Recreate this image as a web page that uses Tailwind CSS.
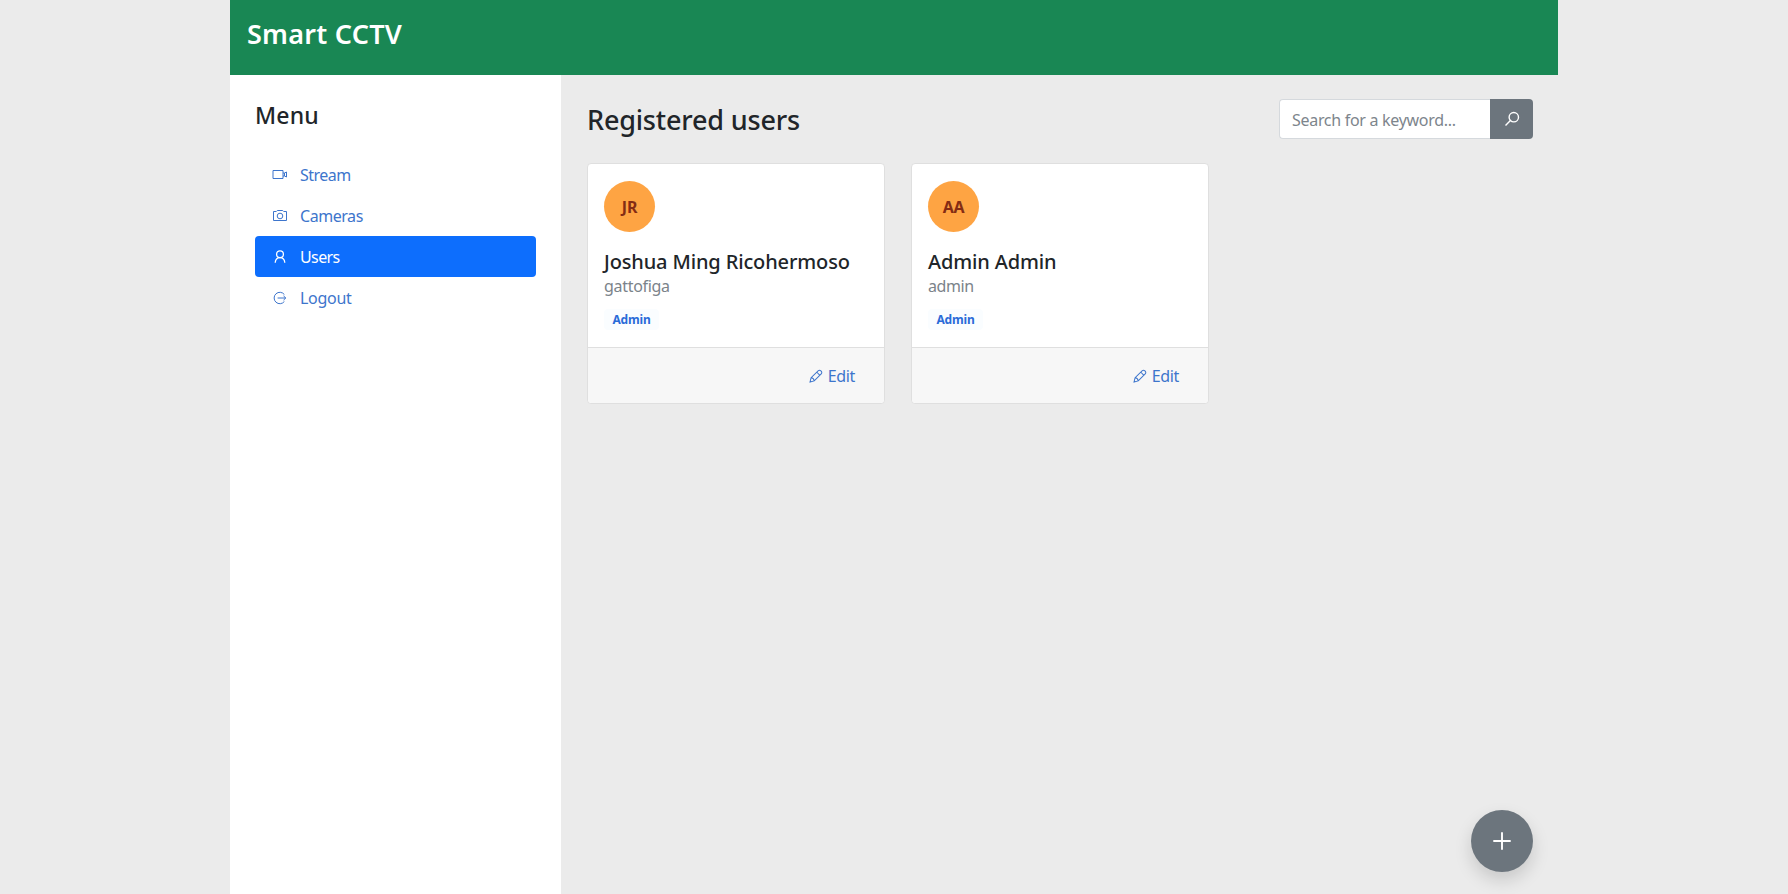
<!DOCTYPE html>
<html lang="en">
<head>
<meta charset="utf-8">
<title>Smart CCTV</title>
<script src="https://cdn.jsdelivr.net/npm/@tailwindcss/browser@4"></script>
</head>
<body class="h-screen overflow-hidden bg-[#ebebeb] font-['Noto_Sans','Open_Sans',sans-serif] text-base text-[#212529]">
<div class="mx-auto flex h-full w-[1328px] flex-col">
  <header class="flex h-[75px] shrink-0 items-start bg-[#198754] px-[17px] pt-[14px]">
    <h1 class="text-[27px] leading-[40px] font-semibold tracking-[0.25px] text-white">Smart CCTV</h1>
  </header>
  <div class="flex min-h-0 flex-1">
    <aside class="w-[331px] shrink-0 bg-white px-[25px] pt-[25px]">
      <h2 class="text-[23px] leading-[30px] font-medium tracking-[0.2px]">Menu</h2>
      <nav class="mt-[24px] flex flex-col text-[#3d75cc]">
        <a class="flex h-[41px] items-center gap-[12px] px-[17px]">
          <svg class="size-[16px]" viewBox="0 0 16 16" fill="none" stroke="currentColor"><path d="M1 3.500h10v8H1zM11 6h1.500v3H11M12.500 6l2-1v5l-2-1"/></svg>
          <span class="tracking-[-0.5px]">Stream</span></a>
        <a class="flex h-[41px] items-center gap-[12px] px-[17px]">
          <svg class="size-[16px]" viewBox="0 0 16 16" fill="none" stroke="currentColor"><path d="M1.500 3.500h2.800l1-1h5.400l1 1h2.800v9h-13z"/><circle cx="8" cy="8" r="2.800"/></svg>
          <span class="tracking-[-0.45px]">Cameras</span></a>
        <a class="flex h-[41px] items-center gap-[12px] rounded-[4px] bg-[#0d6efd] px-[17px] text-white">
          <svg class="size-[16px]" viewBox="0 0 16 16" fill="none" stroke="currentColor" stroke-width="1.300"><circle cx="8" cy="5.200" r="3.400"/><path d="M3.200 13.800c.2-3.400 1.800-5.200 4.800-5.200s4.600 1.800 4.800 5.200"/></svg>
          <span class="tracking-[-0.6px]">Users</span></a>
        <a class="flex h-[41px] items-center gap-[12px] px-[17px]">
          <svg class="size-[16px]" viewBox="0 0 16 16" fill="none" stroke="currentColor"><path d="M12.400 4.600A5.700 5.700 0 1 0 12.400 11.400M5.600 8h8M11.500 5.900 13.800 8l-2.300 2.100"/></svg>
          <span class="tracking-[-0.3px]">Logout</span></a>
      </nav>
    </aside>
    <main class="flex-1 pt-[24px] pr-[25px] pl-[26px]">
      <div class="flex h-[40px] items-center justify-between">
        <h2 class="pt-[2px] text-[27px] leading-[40px] font-medium tracking-[-0.18px]">Registered users</h2>
        <div class="flex h-[40px] w-[254px]">
          <div class="flex flex-1 items-center rounded-l-[4px] border border-r-0 border-[#d5d9dd] bg-white pl-[12px] pt-px tracking-[-0.3px] text-[#7d858c]">Search for a keyword...</div>
          <div class="flex w-[43px] items-center justify-center rounded-r-[4px] bg-[#6c757d] text-white">
            <svg class="size-[16px]" viewBox="0 0 16 16" fill="none" stroke="currentColor" stroke-width="1.400"><circle cx="9.800" cy="6.200" r="4.700"/><path d="M6.400 9.600 1.500 14.500"/></svg>
          </div>
        </div>
      </div>
      <div class="mt-[24px] flex gap-[26px]">
        <article class="h-[241px] w-[298px] rounded-[4px] border border-[#dfdfdf] bg-white">
          <div class="h-[183px] px-[16px] pt-[17px]">
            <div class="flex size-[51px] items-center justify-center rounded-full bg-[#fea443] font-bold tracking-[-0.2px] text-[#842c14]">JR</div>
            <h3 class="mt-[17px] text-xl leading-[26px] font-medium tracking-[-0.14px] whitespace-nowrap">Joshua Ming Ricohermoso</h3>
            <p class="leading-[22px] tracking-[-0.3px] text-[#7b838a]">gattofiga</p>
            <div class="mt-[12px] flex h-[21px] w-[55px] items-center justify-center rounded-[4px] bg-[#fafdff] text-[12px] font-bold tracking-[-0.2px] text-[#2a6bd8]">Admin</div>
          </div>
          <div class="flex h-[56px] items-center justify-end gap-[5px] rounded-b-[4px] border-t border-[#dfdfdf] bg-[#f7f7f7] pr-[29px] text-[#3d75cc]">
            <svg class="size-[14px]" viewBox="0 0 16 16" fill="none" stroke="currentColor" stroke-width="1.150"><path d="M1.200 14.800 2.400 10l8.300-8.200c1.800-1.400 4.900 1.400 3.500 3.500L6 13.600zM9 3.700l3.200 3.200M2.400 10c1.900.2 3.300 1.700 3.600 3.600"/></svg>
            <span class="tracking-[-0.35px]">Edit</span></div>
        </article>
        <article class="h-[241px] w-[298px] rounded-[4px] border border-[#dfdfdf] bg-white">
          <div class="h-[183px] px-[16px] pt-[17px]">
            <div class="flex size-[51px] items-center justify-center rounded-full bg-[#fea443] font-bold tracking-[-0.2px] text-[#842c14]">AA</div>
            <h3 class="mt-[17px] text-xl leading-[26px] font-medium tracking-[-0.14px] whitespace-nowrap">Admin Admin</h3>
            <p class="leading-[22px] tracking-[-0.4px] text-[#7b838a]">admin</p>
            <div class="mt-[12px] flex h-[21px] w-[55px] items-center justify-center rounded-[4px] bg-[#fafdff] text-[12px] font-bold tracking-[-0.2px] text-[#2a6bd8]">Admin</div>
          </div>
          <div class="flex h-[56px] items-center justify-end gap-[5px] rounded-b-[4px] border-t border-[#dfdfdf] bg-[#f7f7f7] pr-[29px] text-[#3d75cc]">
            <svg class="size-[14px]" viewBox="0 0 16 16" fill="none" stroke="currentColor" stroke-width="1.150"><path d="M1.200 14.800 2.400 10l8.300-8.200c1.800-1.400 4.900 1.400 3.500 3.500L6 13.600zM9 3.700l3.200 3.200M2.400 10c1.900.2 3.300 1.700 3.600 3.600"/></svg>
            <span class="tracking-[-0.35px]">Edit</span></div>
        </article>
      </div>
    </main>
  </div>
</div>
<button class="fixed right-[255px] bottom-[22px] flex size-[62px] items-center justify-center rounded-full bg-[#6c757d] text-white shadow-[0_8px_17px_rgba(0,0,0,0.15)]">
  <svg class="size-[18px]" viewBox="0 0 18 18" fill="none" stroke="currentColor" stroke-width="1.900" stroke-linecap="round"><path d="M9 1v16M1 9h16"/></svg>
</button>
</body>
</html>
